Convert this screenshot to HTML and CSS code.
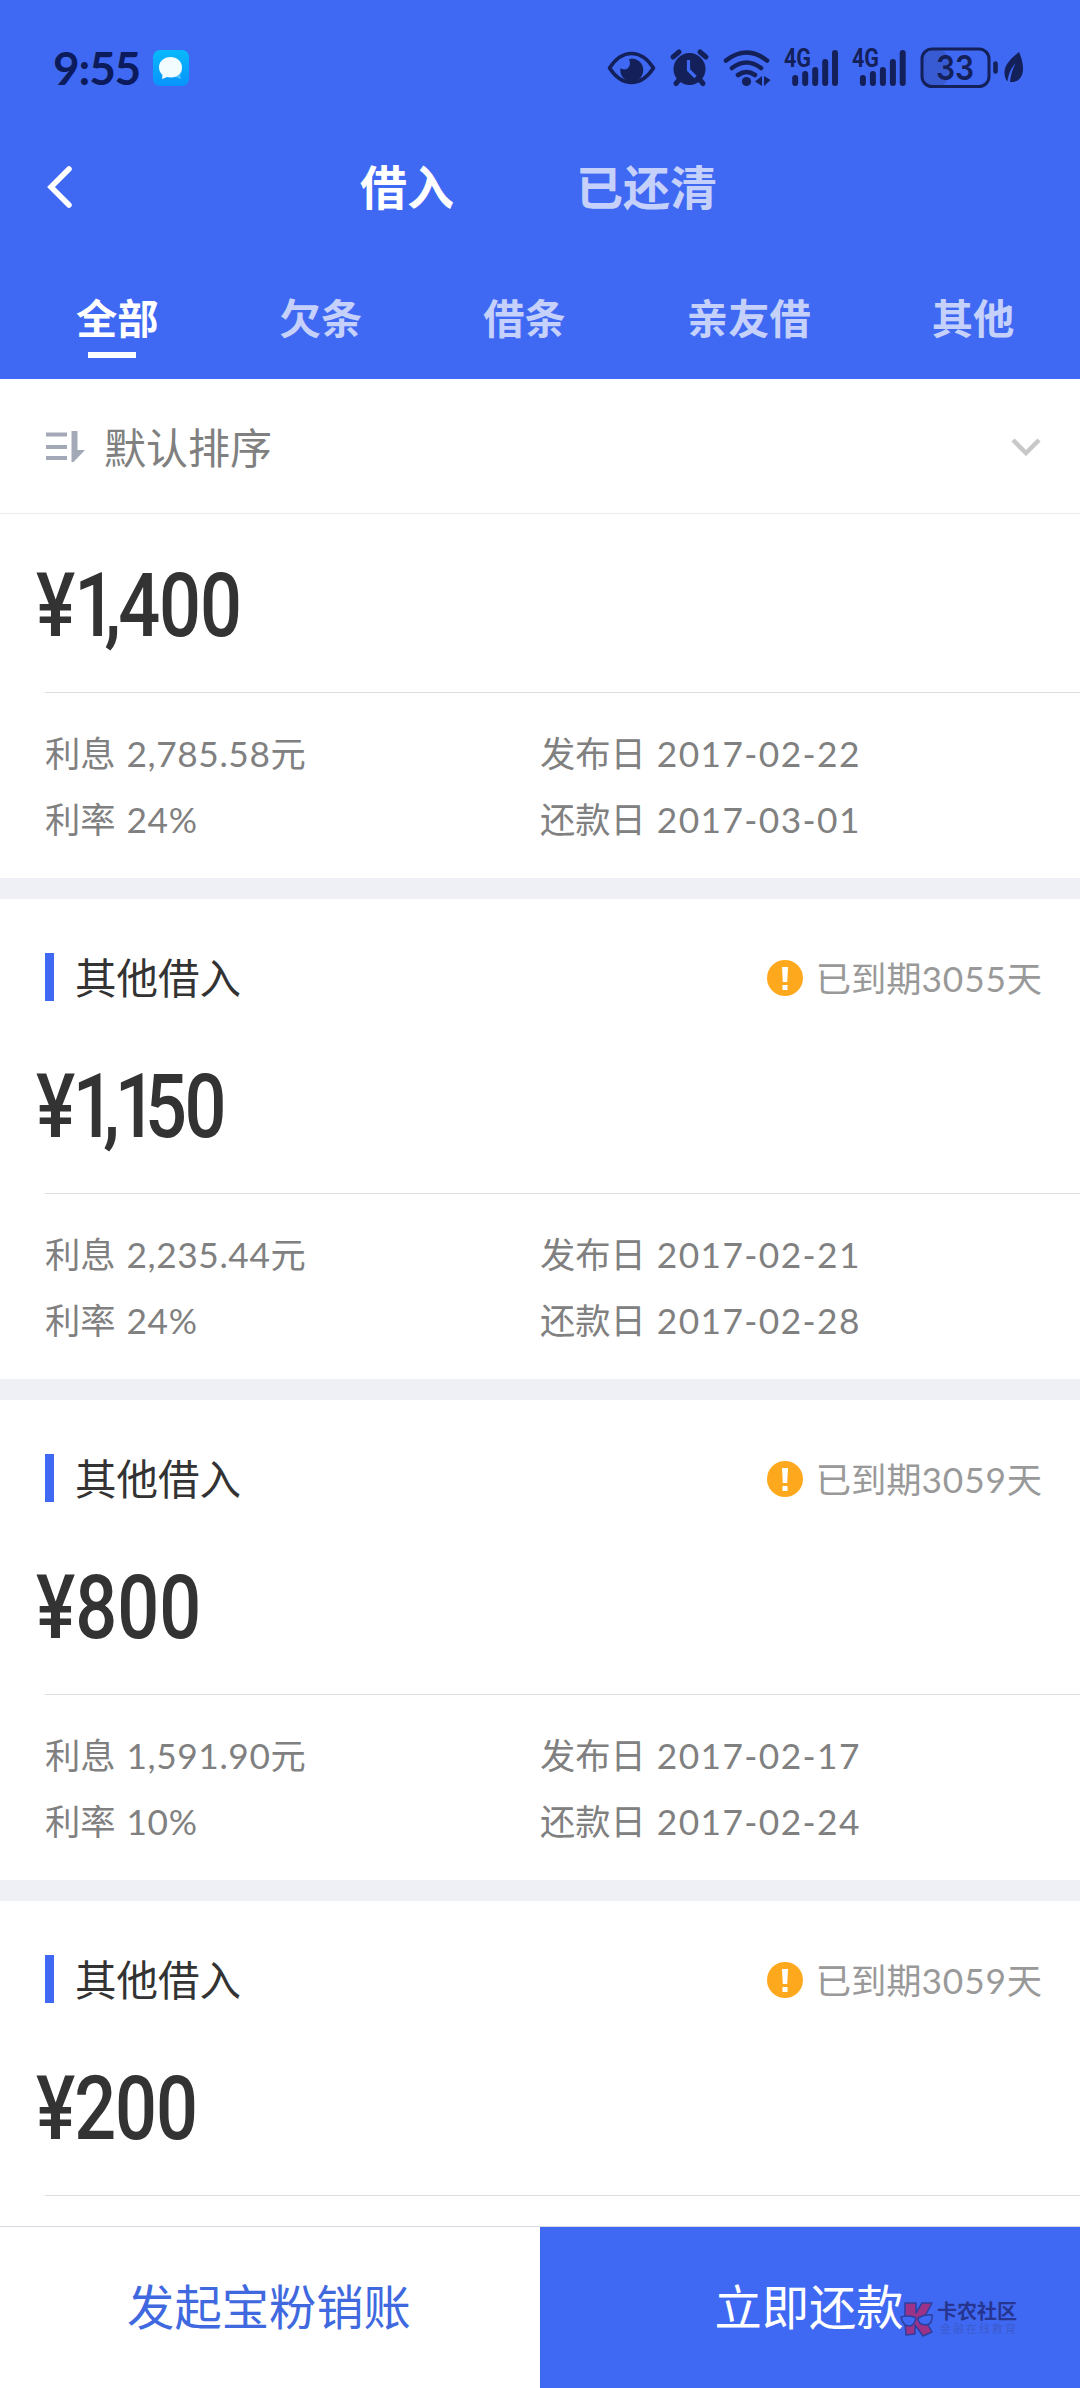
FILE: index.html
```html
<!DOCTYPE html>
<html lang="zh-CN">
<head>
<meta charset="utf-8">
<title>借入</title>
<link rel="stylesheet" href="styles.css">
</head>
<body>
<div class="app">
  <header class="header">
    <div class="statusbar">
      <span class="clock">9:55</span>
      <svg class="msg" width="36" height="36" viewBox="0 0 36 36"><defs><linearGradient id="mg" x1="0" y1="0" x2="0" y2="1"><stop offset="0" stop-color="#08b9fb"/><stop offset="1" stop-color="#0893fb"/></linearGradient></defs><rect width="36" height="36" rx="7" fill="url(#mg)"/><path d="M22 27c4 1 6 2 6 2l-1-4c2-2 2-5 1-7z" fill="#4fc0ff"/><path d="M17.500 7C11 7 6 11.500 6 17.500c0 3 1.500 5.500 3.500 7.500L9 29l5-2c9 2 15-3 15-9.500C29 11.500 24 7 17.500 7z" fill="#f2fcff"/></svg>
      <svg class="sys" width="420" height="64" viewBox="608 35 420 64" fill="#13205a" stroke="none">
        <path d="M610.500 67Q620 52.500 632.500 52.500T654.500 67Q645 81.500 632.500 81.500T610.500 67z" fill="none" stroke="#13205a" stroke-width="3.600" stroke-linejoin="round"/>
        <path d="M630 58a11.500 11.500 0 1 1-8.500 9c5 4 12-1 8.500-9z"/>
        <circle cx="690.500" cy="68" r="16"/>
        <path d="M674 56l6-5M707 56l-6-5" stroke="#13205a" stroke-width="5" stroke-linecap="round"/>
        <path d="M680 79l-3 3.500M701 79l3 3.500" stroke="#13205a" stroke-width="5" stroke-linecap="round"/>
        <path d="M689.500 59v10l7 7" fill="none" stroke="#4069f3" stroke-width="3.200"/>
        <path d="M727 59.500q20.500-16 41 0M733 67q14.500-11 29 0M739 74q8.500-6 17 0" fill="none" stroke="#13205a" stroke-width="4.600" stroke-linecap="round"/>
        <circle cx="747.500" cy="80.500" r="4.600"/>
        <path d="M763 75v10l-7-4.500zM765 75v10l6.500-6z"/>
        <path id="bars" d="M796.200 77v5M806.200 73v9M816.200 69v13M826.200 61v21M836 52v30" stroke="#13205a" stroke-width="6" stroke-linecap="round"/>
        <use href="#bars" x="67.700"/>
        <text x="785" y="66" class="net" textLength="27" lengthAdjust="spacingAndGlyphs">4G</text>
        <text x="853" y="66" class="net" textLength="27" lengthAdjust="spacingAndGlyphs">4G</text>
        <rect x="924" y="49" width="25" height="36" rx="9" fill="#385bd4"/>
        <rect x="923" y="48" width="67" height="37.500" rx="10" fill="none" stroke="#13205a" stroke-width="3"/>
        <path d="M996.500 62.500v8" stroke="#13205a" stroke-width="4.600" stroke-linecap="round"/>
        <text x="937" y="79" class="pct" textLength="38" lengthAdjust="spacingAndGlyphs">33</text>
        <path d="M1020 51c-9 7-15 14-14.500 21 0 4 1.500 7 3 8.500 1-8 4-14 8-18-3 6-5 12-5.500 18.500 9 1 13.500-6 13-14.500-.300-6-2-11-4-15.500z"/>
      </svg>
    </div>
    <nav class="navbar">
      <svg class="back" width="28" height="44" viewBox="0 0 28 44"><path d="M24 4L6 22l18 18" fill="none" stroke="#fff" stroke-width="5.500" stroke-linecap="round"/></svg>
      <span class="seg on">借入</span><span class="seg">已还清</span>
    </nav>
    <nav class="tabs">
      <span class="tab on">全部</span><span class="tab">欠条</span><span class="tab">借条</span><span class="tab">亲友借</span><span class="tab">其他</span>
    </nav>
  </header>
  <div class="sort">
    <svg width="40" height="32" viewBox="0 0 40 32" fill="#a3a9b6"><path d="M0 1.500h21v4H0zM0 14h21v4H0zM0 25h21v4H0zM25.500 0h6v19H39L27.500 31h-2z"/></svg>
    <span>默认排序</span>
    <svg class="down" width="30" height="18" viewBox="0 0 30 18"><path d="M2 2l13 13L28 2" fill="none" stroke="#c8c8c8" stroke-width="4.500"/></svg>
  </div>
  <main class="list">
    <section class="card first">
      <div class="amount">¥<i class="one">1</i><i class="comma">,</i>400</div>
      <div class="details"><p>利息 <b>2,785.58</b>元</p><p>发布日 <b class="date">2017-02-22</b></p><p>利率 <b>24%</b></p><p>还款日 <b class="date">2017-03-01</b></p></div>
    </section>
    <section class="card">
      <div class="title"><h2>其他借入</h2><svg width="36" height="36" viewBox="0 0 36 36"><circle cx="18" cy="18" r="18" fill="#fea91d"/><path d="M15 7h6l-.800 15h-4.400zM15.500 25h5v5h-5z" fill="#fff"/></svg><span>已到期<b>3055</b>天</span></div>
      <div class="amount tight">¥<i class="one">1</i><i class="comma">,</i><i class="one">1</i>50</div>
      <div class="details"><p>利息 <b>2,235.44</b>元</p><p>发布日 <b class="date">2017-02-21</b></p><p>利率 <b>24%</b></p><p>还款日 <b class="date">2017-02-28</b></p></div>
    </section>
    <section class="card">
      <div class="title"><h2>其他借入</h2><svg width="36" height="36" viewBox="0 0 36 36"><circle cx="18" cy="18" r="18" fill="#fea91d"/><path d="M15 7h6l-.800 15h-4.400zM15.500 25h5v5h-5z" fill="#fff"/></svg><span>已到期<b>3059</b>天</span></div>
      <div class="amount wide">¥800</div>
      <div class="details"><p>利息 <b>1,591.90</b>元</p><p>发布日 <b class="date">2017-02-17</b></p><p>利率 <b>10%</b></p><p>还款日 <b class="date">2017-02-24</b></p></div>
    </section>
    <section class="card last">
      <div class="title"><h2>其他借入</h2><svg width="36" height="36" viewBox="0 0 36 36"><circle cx="18" cy="18" r="18" fill="#fea91d"/><path d="M15 7h6l-.800 15h-4.400zM15.500 25h5v5h-5z" fill="#fff"/></svg><span>已到期<b>3059</b>天</span></div>
      <div class="amount">¥200</div>
      <div class="details"></div>
    </section>
  </main>
  <footer class="footer">
    <button class="btn">发起宝粉销账</button>
    <button class="btn primary">立即还款</button>
    <div class="mark">
      <svg width="34" height="36" viewBox="0 0 34 36"><path d="M5 2h11v10l6-10h10l-8 15 8 14-9 4-8-11v9l-9 1-1-11z" fill="#9c3389" stroke="#2c3f9e" stroke-width="1.500" stroke-linejoin="round"/><path d="M1 16q7-2 13 0 3 1 1 4-2 5-6 5-6 0-8-9zM18 17q7-4 14-3 1 9-6 10-8 0-8-7z" fill="#4069f3" stroke="#2c3f9e" stroke-width="1.500"/></svg>
      <div><strong>卡农社区</strong><small>金融在线教育</small></div>
    </div>
  </footer>
</div>
</body>
</html>
```
FILE: styles.css
```css
* { box-sizing: border-box; margin: 0; padding: 0; }
body { width: 1080px; font-family: "Noto Sans CJK SC", sans-serif; background: #fff; overflow: hidden; }
b, i { font-weight: inherit; font-style: normal; }
svg { display: block; flex: none; }
.app { display: flex; flex-direction: column; height: 2388px; }
.header { flex: none; height: 379px; background: #4069f3; color: #fff; display: flex; flex-direction: column; }
.statusbar { height: 136px; padding: 0 53px 0 53px; display: flex; align-items: center; }
.clock { font: 700 46px/60px Lato, sans-serif; color: #0c1b5c; width: 100px; white-space: nowrap; letter-spacing: -1.2px; }
.sys { margin-left: auto; }
.net { font: 700 25px Roboto, sans-serif; }
.pct { font: 600 34px Inter, sans-serif; }
.navbar { height: 103px; display: flex; align-items: center; padding: 0 0 5px 45px; font-size: 47px; line-height: 60px; font-weight: 700; }
.back { width: 28px; margin: 3px 287px 0 0; }
.seg { margin-right: 122px; color: #c5d1fb; white-space: nowrap; }
.seg.on, .tab.on { color: #fff; }
.tabs { display: flex; gap: 121px; padding: 47px 0 0 76px; font-size: 41.300px; line-height: 60px; font-weight: 700; height: 140px; }
.tab { color: #c5d1fb; white-space: nowrap; height: 72px; }
.tab.on::after { content: ""; display: block; width: 48px; height: 6px; background: #fff; margin: 6px 0 0 12px; }
.sort { flex: none; height: 135px; border-bottom: 1px solid #ececee; padding: 2px 39px 0 46px; display: flex; align-items: center; font-size: 42px; line-height: 60px; color: #808080; }
.sort span { margin: -2px 0 0 18px; }
.down { margin-left: auto; }
.list { flex: 1; min-height: 0; overflow: hidden; background: #fff; }
.card { height: 501px; border-bottom: 21px solid #eff0f5; display: flex; flex-direction: column; }
.card.first { height: 385px; }
.title { height: 148px; padding: 50px 38px 43px 45px; display: flex; align-items: center; color: #999; font-size: 35.300px; line-height: 54px; }
.title h2 { font-size: 41.500px; font-weight: 400; color: #333; border-left: 9px solid #4069f3; padding: 0 0 2px 21px; margin-right: auto; line-height: 46px; height: 48px; display: flex; align-items: center; }
.title svg { margin: 2px 13px 0 0; }
.title span { margin-top: 1px; }
.amount { height: 146px; padding-left: 36px; font: 500 89px/120px Roboto, sans-serif; letter-spacing: -1.300px; color: #333; transform: scaleX(.83); transform-origin: 36px 0; white-space: nowrap; }
.first .amount { height: 178px; padding-top: 32px; }
.amount.wide { letter-spacing: 0; }
.amount.tight { letter-spacing: -3px; }
.one { letter-spacing: -14px; }
.comma { letter-spacing: -3.500px; }
.tight .comma { letter-spacing: -6px; }
.details { border-top: 1px solid #dcdee0; margin-left: 45px; padding-top: 26px; display: grid; grid-template-columns: 495px 1fr; grid-auto-rows: 66px; font-size: 35.300px; line-height: 66px; color: #808080; white-space: nowrap; }
.details b, .title b { font-family: Lato, sans-serif; letter-spacing: .8px; line-height: 1; }
.details b { margin-left: 3px; letter-spacing: .6px; }
.details .date { letter-spacing: 1.400px; }
.last { border: 0; }
.footer { flex: none; height: 162px; border-top: 1px solid #d4d8e0; display: grid; grid-template-columns: 1fr 1fr; position: relative; background: #fff; }
.btn { border: 0; background: #fff; color: #4069e0; font: 400 47.300px/60px "Noto Sans CJK SC", sans-serif; padding: 0 2px 5px 0; }
.btn.primary { background: #4069f3; color: #fff; }
.mark { position: absolute; left: 900px; top: 74px; display: flex; gap: 3px; color: #26358f; }
.mark strong { display: block; font-size: 20px; line-height: 20px; }
.mark small { display: block; font-size: 11px; line-height: 15px; letter-spacing: 2px; color: #3c5bcf; padding-left: 3px; }
```
